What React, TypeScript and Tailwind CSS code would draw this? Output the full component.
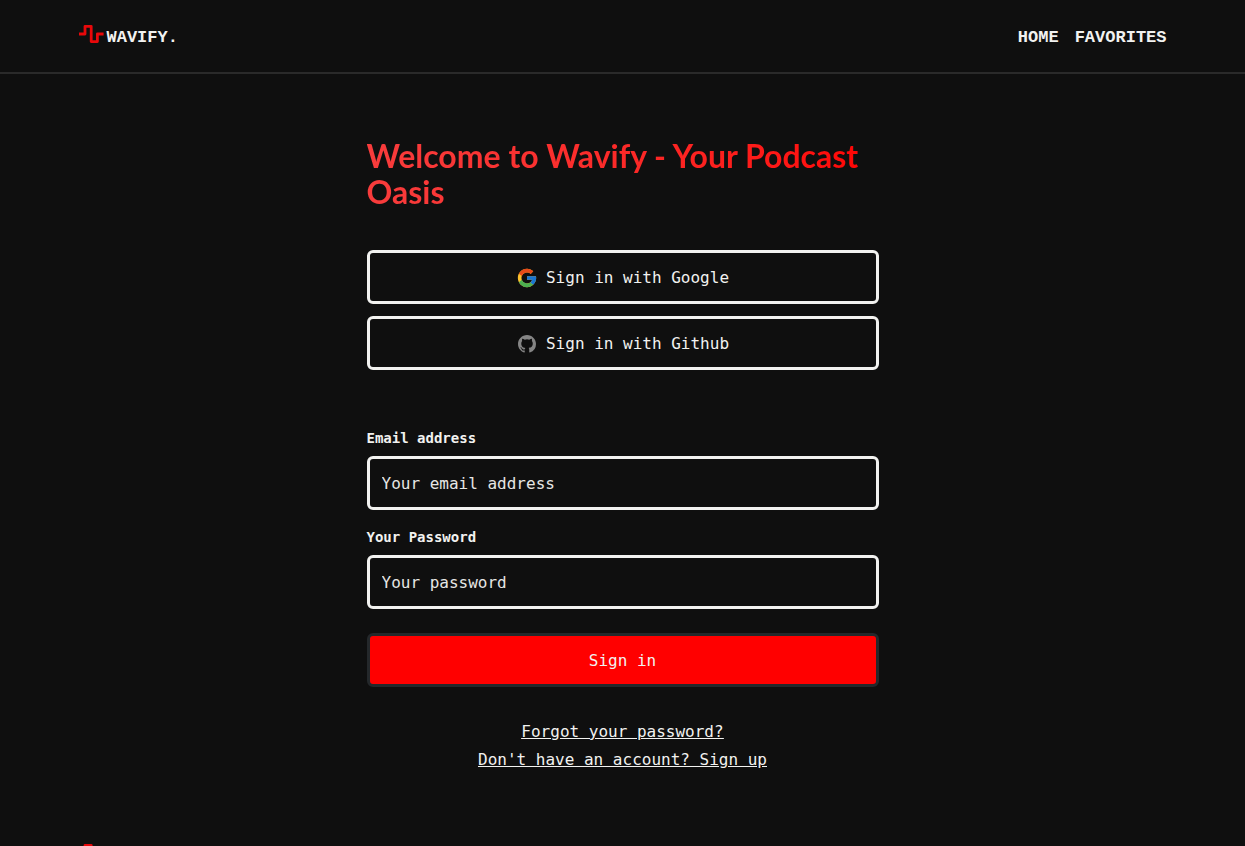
import React from "react";

function WaveMark() {
  return (
    <svg viewBox="0 0 25 20" className="h-5 w-[25px]" fill="none" stroke="#e8080a" strokeWidth="2.8" aria-hidden="true">
      <path d="M0 10H6V2.3H12.2V17.6H18.4V10H24.6" strokeLinejoin="round" />
    </svg>
  );
}

function Brand() {
  return (
    <a href="#home" className="flex items-start gap-[3px] font-['Liberation_Mono',monospace] text-[17px] leading-6 font-bold">
      <WaveMark />
      <span className="pt-0.5">WAVIFY.</span>
    </a>
  );
}

function GoogleIcon() {
  return (
    <svg viewBox="0 0 48 48" className="size-[22px]" aria-hidden="true">
      <path fill="#fbc02d" d="M43.611 20.083H42V20H24v8h11.303c-1.649 4.657-6.08 8-11.303 8-6.627 0-12-5.373-12-12s5.373-12 12-12c3.059 0 5.842 1.154 7.961 3.039l5.657-5.657C34.046 6.053 29.268 4 24 4 12.955 4 4 12.955 4 24s8.955 20 20 20 20-8.955 20-20c0-1.341-.138-2.65-.389-3.917z" />
      <path fill="#e64a19" d="m6.306 14.691 6.571 4.819C14.655 15.108 18.961 12 24 12c3.059 0 5.842 1.154 7.961 3.039l5.657-5.657C34.046 6.053 29.268 4 24 4 16.318 4 9.656 8.337 6.306 14.691z" />
      <path fill="#4caf50" d="M24 44c5.166 0 9.86-1.977 13.409-5.192l-6.19-5.238A11.91 11.91 0 0 1 24 36c-5.202 0-9.619-3.317-11.283-7.946l-6.522 5.025C9.505 39.556 16.227 44 24 44z" />
      <path fill="#1976d2" d="M43.611 20.083H42V20H24v8h11.303a12.04 12.04 0 0 1-4.087 5.571l.003-.002 6.19 5.238C36.971 39.205 44 34 44 24c0-1.341-.138-2.65-.389-3.917z" />
    </svg>
  );
}

function GithubIcon() {
  return (
    <svg viewBox="0 0 16 16" className="mx-0.5 size-[18px]" fill="#858585" aria-hidden="true">
      <path d="M8 0C3.58 0 0 3.58 0 8c0 3.54 2.29 6.53 5.47 7.59.4.07.55-.17.55-.38 0-.19-.01-.82-.01-1.49-2.01.37-2.53-.49-2.69-.94-.09-.23-.48-.94-.82-1.13-.28-.15-.68-.52-.01-.53.63-.01 1.08.58 1.23.82.72 1.21 1.87.87 2.33.66.07-.52.28-.87.51-1.07-1.78-.2-3.64-.89-3.64-3.95 0-.87.31-1.59.82-2.15-.08-.2-.36-1.02.08-2.12 0 0 .67-.21 2.2.82a7.6 7.6 0 0 1 4 0c1.53-1.04 2.2-.82 2.2-.82.44 1.1.16 1.92.08 2.12.51.56.82 1.27.82 2.15 0 3.07-1.87 3.75-3.65 3.95.29.25.54.73.54 1.48 0 1.07-.01 1.93-.01 2.2 0 .21.15.46.55.38A8.01 8.01 0 0 0 16 8c0-4.42-3.58-8-8-8z" />
    </svg>
  );
}

function ProviderButton({ icon, children }: { icon: React.ReactNode; children: React.ReactNode }) {
  return (
    <button
      type="button"
      className="flex w-full items-center justify-center gap-2 rounded-md border-3 border-[#f2f2f0] px-3 pt-[13px] pb-[11px] leading-6"
    >
      {icon}
      <span>{children}</span>
    </button>
  );
}

function Field({ id, type, label, placeholder }: { id: string; type: string; label: string; placeholder: string }) {
  return (
    <div className="flex flex-col gap-2">
      <label htmlFor={id} className="text-sm leading-5 font-bold">
        {label}
      </label>
      <input
        id={id}
        type={type}
        placeholder={placeholder}
        className="w-full rounded-md border-3 border-[#f2f2f0] bg-transparent px-3 pt-[13px] pb-[11px] leading-6 placeholder:text-[#e6e6e4]"
      />
    </div>
  );
}

export default function App() {
  return (
    <div className="min-h-screen bg-[#0f0f0f] font-['DejaVu_Sans_Mono','Liberation_Mono',monospace] text-base text-[#f2f2f0]">
      <header className="border-b-2 border-[#2a2a2a] pt-6 pb-[22px]">
        <div className="mx-auto flex max-w-[1088px] items-start justify-between">
          <Brand />
          <nav className="flex gap-4 pt-0.5 font-['Liberation_Mono',monospace] text-[17px] leading-6 font-bold">
            <a href="#home">HOME</a>
            <a href="#favorites">FAVORITES</a>
          </nav>
        </div>
      </header>

      <main className="mx-auto max-w-lg pt-16 pb-[69px]">
        <h1 className="bg-linear-to-r from-[#f83c3c] to-[#ff0000] bg-clip-text font-['Lato','Open_Sans',sans-serif] text-[32px] leading-9 font-bold text-transparent">
          Welcome to Wavify - Your Podcast Oasis
        </h1>

        <div className="mt-10 flex flex-col gap-3">
          <ProviderButton icon={<GoogleIcon />}>Sign in with Google</ProviderButton>
          <ProviderButton icon={<GithubIcon />}>Sign in with Github</ProviderButton>
        </div>

        <form className="mt-[58px]">
          <div className="flex flex-col gap-[17px]">
            <Field id="email" type="email" label="Email address" placeholder="Your email address" />
            <Field id="password" type="password" label="Your Password" placeholder="Your password" />
          </div>
          <button type="submit" className="mt-6 w-full rounded-md border-3 border-[#24282b] bg-[#ff0000] px-3 pt-[13px] pb-[11px] leading-6">
            Sign in
          </button>
        </form>

        <div className="mt-[31px] flex flex-col items-center leading-7 underline">
          <a href="#forgot">Forgot your password?</a>
          <a href="#signup">Don't have an account? Sign up</a>
        </div>
      </main>

      <footer className="mx-auto max-w-[1088px] pb-6">
        <Brand />
      </footer>
    </div>
  );
}
